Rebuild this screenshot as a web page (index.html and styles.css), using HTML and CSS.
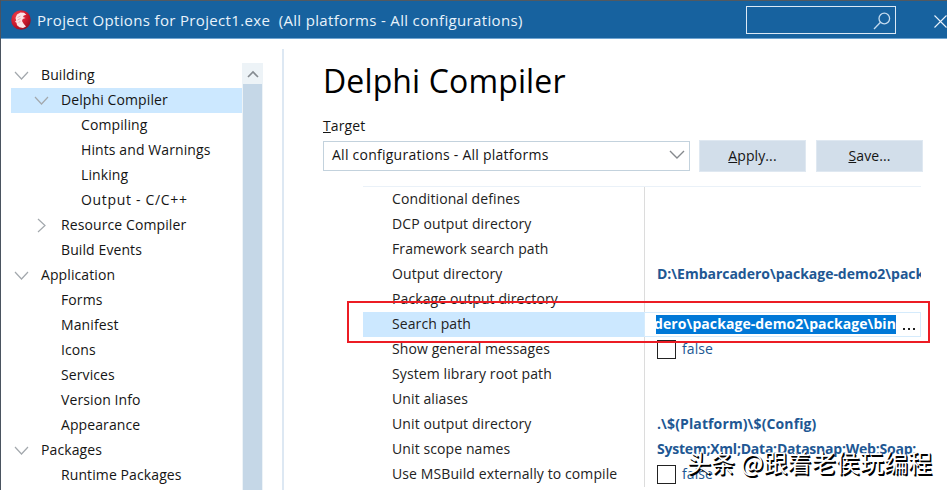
FILE: index.html
```html
<!DOCTYPE html>
<html lang="en">
<head>
<meta charset="utf-8">
<title>Project Options</title>
<link rel="stylesheet" href="styles.css">
</head>
<body>
<div class="window">
  <header class="titlebar">
    <svg class="logo" viewBox="0 0 20 20"><defs><radialGradient id="g" cx=".35" cy=".3" r=".8"><stop offset="0" stop-color="#f0404c"/><stop offset=".6" stop-color="#c8182c"/><stop offset="1" stop-color="#8c0c20"/></radialGradient></defs><circle cx="10" cy="10" r="9.8" fill="url(#g)"/><path d="M4.500 8l1.500-3.500L9.500 2.500l3.500.3 2.300 2-2.500.6-.8 1.600 2.500 1-2.800 1-.7 2 1.500 2.500 2.500 3-3 1.500-3.500-.7-2.500-2-.5-2.500-1.500-1 1.200-1.300z" fill="#fbe3e5"/><path d="M6.500 7.500l3-1.500M6.500 10l3-1.500M7.500 12.500l2-1.200" stroke="#e08a92" stroke-width=".6"/></svg>
    <h1 class="title">Project Options for Project1.exe&nbsp; (All platforms - All configurations)</h1>
    <div class="search"><svg class="lens" viewBox="0 0 18 18"><circle cx="11.300" cy="6.500" r="5.300"/><path d="M7.500 10.300L1 17"/></svg></div>
    <svg class="close" viewBox="0 0 13 13"><path d="M.5.5l12 12M12.500.5l-12 12"/></svg>
  </header>
  <div class="content">
    <nav class="tree">
      <div class="node l1"><svg class="chev" viewBox="0 0 15 15"><path d="M1 4l6.500 7L14 4"/></svg><span>Building</span></div>
      <div class="node l2 selected"><svg class="chev" viewBox="0 0 15 15"><path d="M1 4l6.500 7L14 4"/></svg><span>Delphi Compiler</span></div>
      <div class="node l3"><span>Compiling</span></div>
      <div class="node l3"><span>Hints and Warnings</span></div>
      <div class="node l3"><span>Linking</span></div>
      <div class="node l3"><span class="wide">Output - C/C++</span></div>
      <div class="node l2"><svg class="chev" viewBox="0 0 15 15"><path d="M4 1l7 6.500L4 14"/></svg><span>Resource Compiler</span></div>
      <div class="node l2"><span>Build Events</span></div>
      <div class="node l1"><svg class="chev" viewBox="0 0 15 15"><path d="M1 4l6.500 7L14 4"/></svg><span>Application</span></div>
      <div class="node l2"><span>Forms</span></div>
      <div class="node l2"><span>Manifest</span></div>
      <div class="node l2"><span>Icons</span></div>
      <div class="node l2"><span>Services</span></div>
      <div class="node l2"><span>Version Info</span></div>
      <div class="node l2"><span>Appearance</span></div>
      <div class="node l1"><svg class="chev" viewBox="0 0 15 15"><path d="M1 4l6.500 7L14 4"/></svg><span>Packages</span></div>
      <div class="node l2"><span>Runtime Packages</span></div>
    </nav>
    <div class="scrollbar"><div class="up"><svg viewBox="0 0 12 8"><path d="M1 7l5-5 5 5"/></svg></div><div class="thumb"></div></div>
    <main class="panel">
      <h2 class="heading">Delphi Compiler</h2>
      <label class="target"><u>T</u>arget</label>
      <div class="controls">
        <div class="combo"><span>All configurations - All platforms</span><svg class="arrow" viewBox="0 0 16 9"><path d="M1 1l7 7 7-7"/></svg></div>
        <div class="button"><span><u>A</u>pply...</span></div>
        <div class="button"><span><u>S</u>ave...</span></div>
      </div>
      <div class="grid">
        <div class="name">Conditional defines</div><div class="value"></div>
        <div class="name">DCP output directory</div><div class="value"></div>
        <div class="name">Framework search path</div><div class="value"></div>
        <div class="name">Output directory</div><div class="value"><b>D:\Embarcadero\package-demo2\package</b></div>
        <div class="name">Package output directory</div><div class="value"></div>
        <div class="name current"><span>Search path</span></div><div class="value editing"><div class="edit"><b>D:\Embarcadero\package-demo2\package\bin</b></div><span class="dots"><i></i><i></i><i></i></span></div>
        <div class="name">Show general messages</div><div class="value"><span class="box"></span><span>false</span></div>
        <div class="name">System library root path</div><div class="value"></div>
        <div class="name">Unit aliases</div><div class="value"></div>
        <div class="name">Unit output directory</div><div class="value"><b class="config">.\$(Platform)\$(Config)</b></div>
        <div class="name">Unit scope names</div><div class="value"><b class="scope">System;Xml;Data;Datasnap;Web;Soap;</b></div>
        <div class="name">Use MSBuild externally to compile</div><div class="value"><span class="box"></span><span>false</span></div>
      </div>
    </main>
  </div>
  <div class="highlight"></div>
  <div class="watermark">头条 @跟着老侯玩编程</div>
</div>
</body>
</html>
```

FILE: styles.css
```css
* { box-sizing: border-box; }
body { margin: 0; }
.window {
  position: relative; width: 947px; height: 490px; overflow: hidden;
  background: #fff; border-left: 1px solid #4a5360; color: #151515;
  font: 14px/25px "Open Sans", sans-serif; letter-spacing: .1px; white-space: nowrap;
}
svg { display: block; fill: none; }
.titlebar {
  display: flex; align-items: center; height: 39px; padding-left: 10px;
  background: #17629f; border-top: 1px solid #525960; border-bottom: 1px solid #70a5d2; color: #e8f2fb;
}
.logo { width: 20px; height: 20px; flex: none; }
.title { width: 715px; flex: none; margin: 2px 0 0; padding-left: 6px; font: 15px/25px "Open Sans", sans-serif; letter-spacing: .34px; }
.search { display: flex; justify-content: flex-end; width: 150px; height: 28px; flex: none; padding: 5px 4px; border: 1px solid #dce9f5; }
.lens { width: 18px; height: 18px; stroke: #c3daee; stroke-width: 1.3; }
.close { width: 13px; height: 13px; flex: none; margin: 3px 0 0 38px; stroke: #e8f2fb; stroke-width: 1.1; }
.content { display: flex; height: 451px; }
.tree { width: 231px; margin-left: 10px; padding-top: 24px; flex: none; }
.node { display: flex; align-items: center; height: 25px; line-height: 23px; padding-bottom: 2px; }
.node.l1 { padding-left: 30px; }
.node.l2 { padding-left: 50px; }
.node.l3 { padding-left: 70px; }
.selected { background: #cce8ff; }
.wide { letter-spacing: .68px; }
.chev { width: 15px; height: 15px; margin: 1px 12px 0 -27px; stroke: #a3a8ad; stroke-width: 1.2; }
.scrollbar { width: 21px; height: 427px; margin-top: 24px; padding: 0 1px; flex: none; background: #edf3f7; }
.up { display: flex; align-items: center; justify-content: center; height: 21px; }
.up svg { width: 12px; height: 8px; stroke: #858b91; stroke-width: 1.6; }
.thumb { height: 406px; background: #c5d7e7; }
.panel { width: 642px; height: 441px; margin: 10px 0 0 19px; padding-left: 39px; border-left: 2px solid #dde8f3; }
.heading { margin: 10px 0 0; font: 32px/44px "Open Sans", sans-serif; letter-spacing: .13px; color: #000; }
.target { display: block; height: 22px; margin-top: 12px; line-height: 22px; }
.controls { display: flex; gap: 10px; margin-top: 3px; height: 33px; }
.combo { display: flex; align-items: center; justify-content: space-between; width: 367px; height: 30px; margin-top: 1px; padding: 0 4px 3px 8px; border: 1px solid #c3d2dd; letter-spacing: .25px; }
.arrow { width: 16px; height: 9px; stroke: #85898d; stroke-width: 1.4; }
.button { width: 107px; height: 32px; margin-left: -1px; padding-bottom: 2px; display: flex; align-items: center; justify-content: center; background: #d2deea; border: 1px solid #dfe8f1; }
.button + .button { margin-left: 0; }
.grid { display: grid; grid-template-columns: 281px 277px; grid-auto-rows: 25px; width: 558px; margin: 13px 0 0 40px; border-top: 1px solid #eaf1f8; }
.name { padding-left: 29px; color: #222; line-height: 23px; }
.current { background: #cce8ff; }
.value { display: flex; align-items: center; gap: 6px; padding: 0 0 2px 12px; line-height: 23px; border-left: 1px solid #dcdcdc; color: #215793; overflow: hidden; }
.value b { letter-spacing: -.02px; }
.value .config { letter-spacing: .12px; }
.value .scope { letter-spacing: -.22px; }
.value .box { position: relative; top: 1px; }
.editing { gap: 7px; padding: 0 0 1px 11px; border: 1px solid #d5ebfc; background: #fff; }
.edit { display: flex; justify-content: flex-end; width: 240px; height: 19px; overflow: hidden; background: #0078d7; color: #fff; line-height: 18px; }
.value .edit b { letter-spacing: .08px; }
.box { width: 19px; height: 19px; border: 1px solid #222; }
.dots { display: flex; gap: 3px; padding-top: 10px; }
.dots i { width: 2px; height: 2px; background: #222; }
.highlight { position: absolute; left: 346px; top: 301px; width: 583px; height: 42px; border: 2px solid #ec1c24; }
.watermark { position: absolute; left: 686px; top: 445px; font: 24px/34px "Noto Sans CJK SC", sans-serif; letter-spacing: .1px; color: #fff; text-shadow: 1px 1px 0 #000, 1.5px 1.5px 0 #000; }
```
